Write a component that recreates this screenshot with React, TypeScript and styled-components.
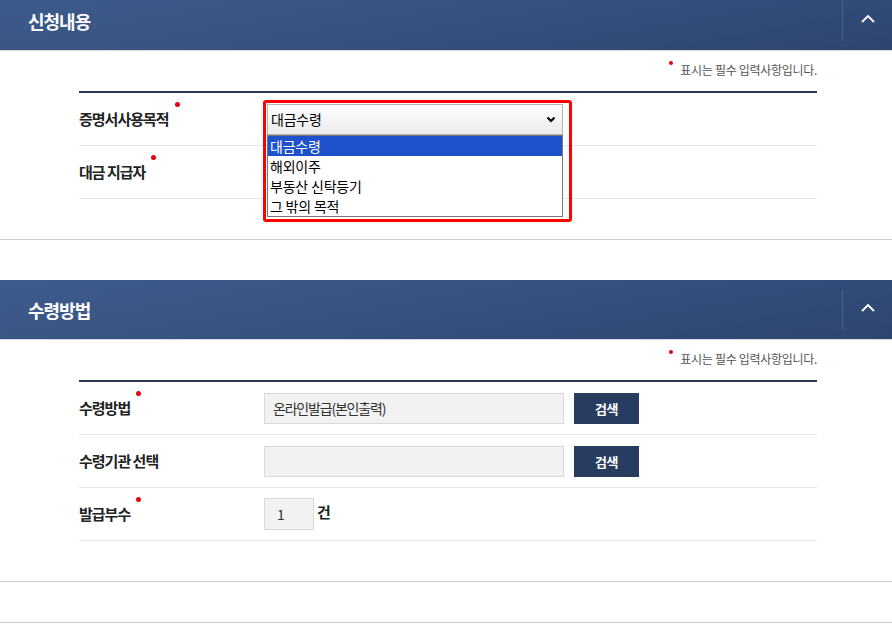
import React from "react"
import styled, { createGlobalStyle } from "styled-components"

const purposeOptions = ["대금수령", "해외이주", "부동산 신탁등기", "그 밖의 목적"]

const ChevronUp: React.FC = () => (
	<svg width="14" height="9" viewBox="0 0 14 9">
		<polyline points="1,8 7,2 13,8" fill="none" stroke="#fff" strokeWidth="1.8" />
	</svg>
)

const ChevronDown: React.FC = () => (
	<svg width="10" height="7" viewBox="0 0 10 7">
		<polyline points="1.5,1.5 5,5 8.5,1.5" fill="none" stroke="#000" strokeWidth="2.2" />
	</svg>
)

type SectionProps = {
	title: string
	children: React.ReactNode
}

const FormSection: React.FC<SectionProps> = ({ title, children }) => (
	<Section>
		<Header>
			<Title>{title}</Title>
			<Toggle type="button" aria-label="접기">
				<ChevronUp />
			</Toggle>
		</Header>
		<Body>
			<Note>
				<Dot />
				표시는 필수 입력사항입니다.
			</Note>
			<Table>{children}</Table>
		</Body>
	</Section>
)

type RowProps = {
	label: string
	required?: boolean
	children?: React.ReactNode
}

const FormRow: React.FC<RowProps> = ({ label, required, children }) => (
	<Row>
		<LabelCell>
			<LabelText>{label}</LabelText>
			{required && <RequiredDot />}
		</LabelCell>
		<ValueCell>{children}</ValueCell>
	</Row>
)

const App: React.FC = () => {
	return (
		<>
			<GlobalStyle />
			<Page>
				<FormSection title="신청내용">
					<FormRow label="증명서사용목적" required>
						<SelectWrap>
							<SelectBox>
								<span>대금수령</span>
								<ChevronDown />
							</SelectBox>
							<OptionList>
								{purposeOptions.map((option, i) => (
									<Option key={option} selected={i === 0}>
										{option}
									</Option>
								))}
							</OptionList>
							<Highlight />
						</SelectWrap>
					</FormRow>
					<FormRow label="대금 지급자" required />
				</FormSection>

				<FormSection title="수령방법">
					<FormRow label="수령방법" required>
						<TextBox readOnly value="온라인발급(본인출력)" />
						<SearchButton type="button">검색</SearchButton>
					</FormRow>
					<FormRow label="수령기관 선택">
						<TextBox readOnly value="" />
						<SearchButton type="button">검색</SearchButton>
					</FormRow>
					<FormRow label="발급부수" required>
						<CountBox readOnly value="1" />
						<Unit>건</Unit>
					</FormRow>
				</FormSection>
				<NextSection />
			</Page>
		</>
	)
}

const GlobalStyle = createGlobalStyle`
	body {
		margin: 0;
		background: #fff;
		font-family: "Noto Sans CJK KR", "Noto Sans", sans-serif;
		overflow: hidden;
	}
`

const Page = styled.div`
	margin-top: -9px;
`

const Section = styled.section`
	border-bottom: 1px solid #cfcfcf;
	margin-bottom: 40px;
`

const Header = styled.div`
	display: flex;
	align-items: center;
	height: 59px;
	padding-left: 28px;
	background: linear-gradient(170deg, #3e5c8c 0%, #34507e 55%, #2e456e 100%);
	border-bottom: 1px solid #d9d9d9;
`

const Title = styled.h2`
	flex: 1;
	margin: 0;
	color: #fff;
	font-size: 18px;
	font-weight: 700;
	letter-spacing: -1px;
`

const Toggle = styled.button`
	display: flex;
	align-items: center;
	justify-content: center;
	width: 50px;
	height: 40px;
	padding: 0 0 4px;
	background: none;
	border: none;
	border-left: 1px solid rgba(255, 255, 255, 0.13);
	cursor: pointer;
`

const Body = styled.div`
	padding: 0 75px 40px 79px;
`

const Note = styled.p`
	margin: 0;
	padding: 10px 0 12px;
	text-align: right;
	font-size: 12px;
	line-height: 18px;
	color: #555;
	letter-spacing: -0.3px;
`

const Dot = styled.span`
	display: inline-block;
	width: 4px;
	height: 4px;
	margin-right: 7px;
	border-radius: 50%;
	background: #e60012;
	vertical-align: 10px;
`

const Table = styled.div`
	border-top: 2px solid #2a3853;
`

const Row = styled.div`
	display: flex;
	align-items: center;
	height: 52px;
	border-bottom: 1px solid #e6e6e6;
`

const LabelCell = styled.div`
	display: flex;
	align-items: center;
	width: 185px;
	flex-shrink: 0;
`

const LabelText = styled.span`
	font-size: 15px;
	font-weight: 700;
	color: #222;
	letter-spacing: -1px;
	line-height: 20px;
`

const RequiredDot = styled.span`
	width: 5px;
	height: 5px;
	margin: 0 0 30px 6px;
	border-radius: 50%;
	background: #e60012;
`

const ValueCell = styled.div`
	display: flex;
	align-items: center;
	gap: 10px;
	flex: 1;
`

const SelectWrap = styled.div`
	position: relative;
	z-index: 2;
	margin-left: 3px;
`

const SelectBox = styled.div`
	display: flex;
	align-items: center;
	justify-content: space-between;
	box-sizing: border-box;
	width: 296px;
	height: 31px;
	padding: 0 6px 0 3px;
	background: linear-gradient(#fdfdfd, #ececec);
	border: 1px solid #b5b5b5;
	font-size: 14px;
	letter-spacing: -0.2px;
	color: #000;
`

const OptionList = styled.ul`
	position: absolute;
	top: 100%;
	left: 0;
	box-sizing: border-box;
	width: 296px;
	margin: 0;
	padding: 0;
	list-style: none;
	background: #fff;
	border: 1px solid #767676;
`

const Option = styled.li<{ selected?: boolean }>`
	height: 20px;
	padding-left: 2px;
	font-size: 14px;
	line-height: 20px;
	letter-spacing: -0.2px;
	color: ${(props): string => (props.selected ? "#fff" : "#000")};
	background: ${(props): string => (props.selected ? "#1d52cc" : "transparent")};
`

const Highlight = styled.div`
	position: absolute;
	top: -4px;
	left: -4px;
	box-sizing: border-box;
	width: 309px;
	height: 122px;
	border: 3px solid #ff0000;
	border-radius: 3px;
	pointer-events: none;
`

const TextBox = styled.input`
	box-sizing: border-box;
	width: 300px;
	height: 31px;
	padding: 0 8px;
	background: #f2f2f2;
	border: 1px solid #d9d9d9;
	font-family: inherit;
	font-size: 14px;
	letter-spacing: -1.2px;
	color: #333;
	outline: none;
`

const CountBox = styled(TextBox)`
	width: 50px;
	height: 32px;
	padding: 0 12px;
`

const Unit = styled.span`
	margin: 0 0 6px -7px;
	font-size: 15px;
	font-weight: 700;
	color: #222;
`

const SearchButton = styled.button`
	width: 65px;
	height: 31px;
	background: #283c5f;
	border: none;
	color: #fff;
	font-family: inherit;
	font-size: 13px;
	font-weight: 700;
	letter-spacing: -0.5px;
	cursor: pointer;
`

const NextSection = styled.div`
	border-top: 1px solid #cfcfcf;
`

export default App
